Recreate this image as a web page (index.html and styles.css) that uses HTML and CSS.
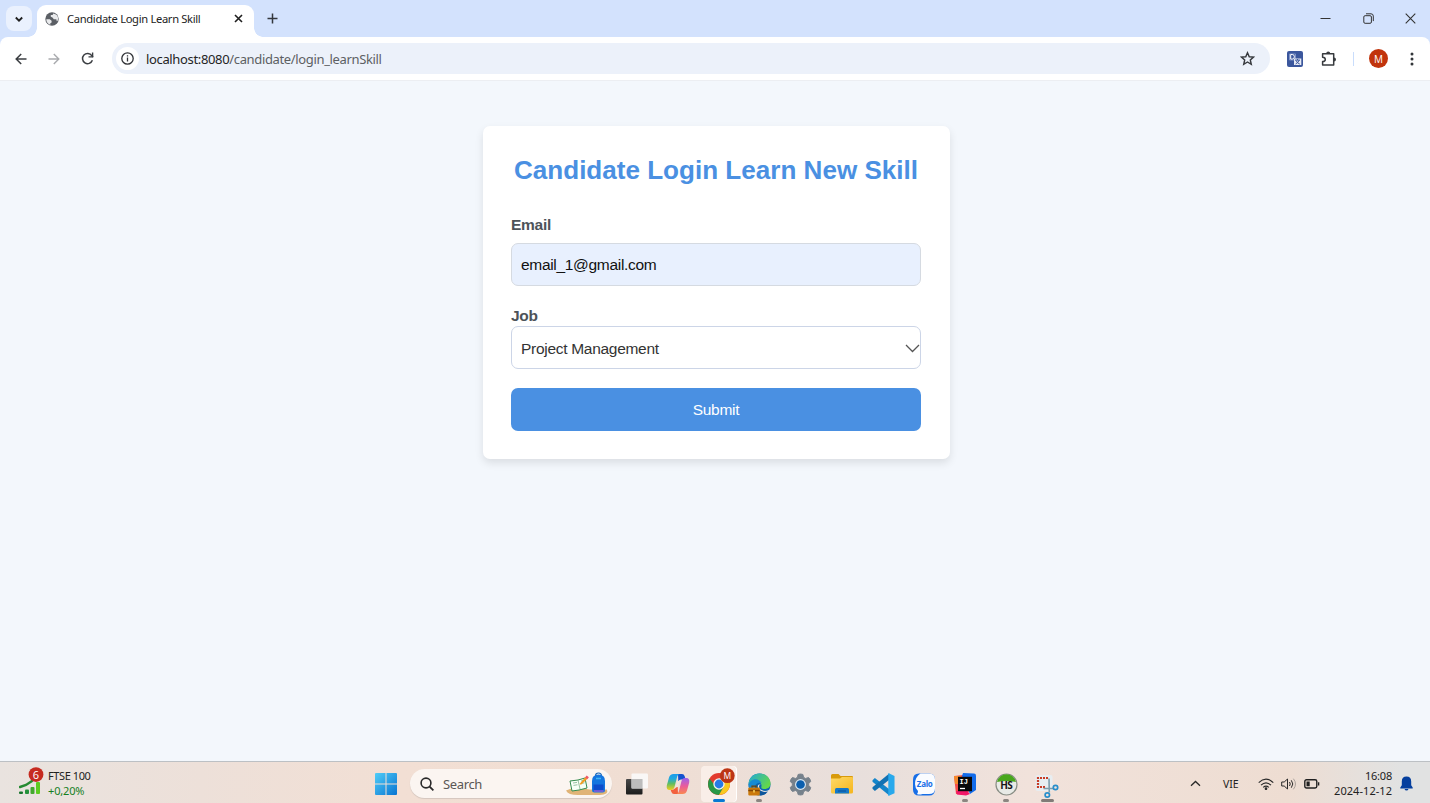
FILE: index.html
```html
<!DOCTYPE html>
<html lang="en">
<head>
<meta charset="utf-8">
<title>Candidate Login Learn Skill</title>
<link rel="stylesheet" href="styles.css">
</head>
<body>
<div class="screen">
  <header class="tabstrip">
    <div class="tab-search"><svg width="10" height="10" viewBox="0 0 10 10"><path d="M1.800 3.500 5 6.700l3.200-3.200" fill="none" stroke="#1f1f1f" stroke-width="1.800"/></svg></div>
    <div class="tab">
      <svg class="globe" width="14" height="14" viewBox="0 0 14 14"><circle cx="7" cy="7" r="6.700" fill="#5b5f65"/><path d="M1.300 7.200h3.500l1.800 1.500v1.800l-1.300.7v1.600C3 12.100 1.200 9.900 1.300 7.200zM8.300 1.500 7.600 3H5.800v1.700l1.700.8 1.300 1.800h2.500l.5 2 .7-.4c1.500-3.300.1-6.700-4.200-7.400z" fill="#e9eaec"/></svg>
      <span class="tab-title">Candidate Login Learn Skill</span>
      <svg class="tab-close" width="9" height="9" viewBox="0 0 9 9"><path d="m1 1 7 7m0-7L1 8" stroke="#1f1f1f" stroke-width="1.600"/></svg>
    </div>
    <svg class="new-tab" width="11" height="11" viewBox="0 0 11 11"><path d="M5.500.5v10M.5 5.500h10" stroke="#33373d" stroke-width="1.500"/></svg>
    <div class="window-controls">
      <svg width="11" height="11" viewBox="0 0 11 11"><path d="M.5 5.500h10" stroke="#333" stroke-width="1"/></svg>
      <svg width="11" height="11" viewBox="0 0 11 11" fill="none" stroke="#333"><rect x=".8" y="2.700" width="7.600" height="7.600" rx="1.300"/><path d="M3 .8h5a2.300 2.300 0 0 1 2.300 2.300v5"/></svg>
      <svg width="11" height="11" viewBox="0 0 11 11"><path d="m.7.700 9.600 9.600m0-9.600L.7 10.300" stroke="#333" stroke-width="1.100"/></svg>
    </div>
  </header>

  <nav class="toolbar">
    <div class="toolbar-inner">
      <div class="nav-buttons">
        <svg width="12" height="12" viewBox="0 0 12 12"><path d="M11.500 6H1.300m4.900-5L1.200 6l5 5" fill="none" stroke="#3b3e42" stroke-width="1.500"/></svg>
        <svg width="12" height="12" viewBox="0 0 12 12"><path d="M.5 6h10.200m-4.900-5 5 5-5 5" fill="none" stroke="#a9abae" stroke-width="1.400"/></svg>
        <svg width="13" height="13" viewBox="0 0 13 13"><path d="M11.400 8.300A5.100 5.100 0 1 1 10.800 3.600L12 5" fill="none" stroke="#3b3e42" stroke-width="1.500"/><path d="M12.300.6v5H7.500V4.200h3.400V.6z" fill="#3b3e42"/></svg>
      </div>
      <div class="omnibox">
        <span class="site-info"><svg width="13" height="13" viewBox="0 0 13 13"><circle cx="6.500" cy="6.500" r="5.700" fill="none" stroke="#303236" stroke-width="1.300"/><path d="M6.500 5.600v4M6.500 3.200v1.300" stroke="#303236" stroke-width="1.300"/></svg></span>
        <span class="url">localhost:8080<span class="url-path">/candidate/login_learnSkill</span></span>
        <svg class="star" width="15" height="15" viewBox="0 0 24 24"><path d="m12 2.800 2.800 6.400 6.900.6-5.200 4.600 1.500 6.800-6-3.600-6 3.600 1.500-6.800-5.200-4.600 6.900-.6z" fill="none" stroke="#36393d" stroke-width="2.300"/></svg>
      </div>
      <div class="extensions">
        <svg width="16" height="16" viewBox="0 0 16 16"><rect width="16" height="16" rx="2" fill="#3b579d"/><path d="M2.500 3h6v6h-6z" fill="none" stroke="#7f94c8"/><path d="M3.700 3.500v4.600h1.500q2.200 0 2.200-2.300T5.200 3.500z" fill="none" stroke="#fff"/><path d="M7 7.500h7.300V14H7z" fill="#e6eaf5"/><path d="M8 9.100h5M10.500 8v1.100m1.700 0q-.7 2.400-3.600 3.900m.5-3.400q1 2.400 3.700 3.500" fill="none" stroke="#3b579d"/></svg>
        <svg class="puzzle" width="16" height="16" viewBox="0 0 16 16"><path d="M1.600 2.700h11.100v11.400H1.600v-3.500q2.700-.2 2.700-2.200T1.600 6.200z" fill="none" stroke="#383b3f" stroke-width="1.500" stroke-linejoin="round"/><path d="M5.200 2.400a2 2 0 0 1 4 0zM13 6.400a2 2 0 0 1 0 4z" fill="#383b3f"/></svg>
        <span class="divider"></span>
        <span class="avatar">M</span>
        <svg class="more" width="4" height="14" viewBox="0 0 4 14" fill="#33363a"><circle cx="2" cy="2" r="1.500"/><circle cx="2" cy="7" r="1.500"/><circle cx="2" cy="12" r="1.500"/></svg>
      </div>
    </div>
  </nav>

  <main class="page">
    <form class="card">
      <h1 class="card-title">Candidate Login Learn New Skill</h1>
      <label class="label label-email" for="email">Email</label>
      <input class="email" id="email" type="text" value="email_1@gmail.com">
      <label class="label label-job">Job</label>
      <div class="select"><span>Project Management</span><svg width="15" height="9" viewBox="0 0 15 9"><path d="m1 1 6.500 6.500L14 1" fill="none" stroke="#555" stroke-width="1.300"/></svg></div>
      <button class="submit" type="button">Submit</button>
    </form>
  </main>

  <footer class="taskbar">
    <div class="widget">
      <svg width="26" height="30" viewBox="0 0 26 30"><rect x="0" y="24.500" width="4" height="2.500" rx="1" fill="#17762c"/><rect x="6" y="22.500" width="4" height="4.500" rx="1" fill="#24913a"/><rect x="11.500" y="20" width="4" height="7" rx="1" fill="#43a82e"/><rect x="17" y="15" width="4" height="12" rx="1" fill="#5dcc20"/><path d="m1 20 6-2 6-4" fill="none" stroke="#268a32" stroke-width="2.400" stroke-linecap="round"/><circle cx="17" cy="7.600" r="7.400" fill="#c62b20"/><text x="17" y="11.600" class="count-text">6</text></svg>
      <div class="widget-text"><span>FTSE 100</span><span class="gain">+0,20%</span></div>
    </div>

    <div class="dock">
      <svg class="start" width="22" height="22" viewBox="0 0 22 22"><defs><linearGradient id="win" x2="1" y2="1"><stop stop-color="#50cdf7"/><stop offset="1" stop-color="#0874d2"/></linearGradient></defs><path d="M1 0h9.500v10.500H0V1q0-1 1-1zm10.500 0H21q1 0 1 1v9.500H11.500zM0 11.500h10.500V22H1q-1 0-1-1zm11.500 0H22V21q0 1-1 1h-9.500z" fill="url(#win)"/></svg>
      <div class="search">
        <svg width="14" height="14" viewBox="0 0 14 14"><circle cx="6" cy="6" r="4.900" fill="none" stroke="#292929" stroke-width="1.600"/><path d="m9.600 9.600 3.800 3.800" stroke="#292929" stroke-width="1.800"/></svg>
        <span class="search-label">Search</span>
        <svg class="school" width="43" height="24" viewBox="0 0 43 24"><path d="M0 18.500q8-4 17-2t24 1q2 5-7 5.500H12Q2 23 0 18.500z" fill="#e0b477"/><path d="m4 9 8-1 7-2 2 10-8 2-7 1z" fill="#f8fff7" stroke="#348b4d"/><path d="m12 8 2 9M7 11l4-.6m-3.500 3 4-.6M15 9l3-.7m-2.500 3.200 3-.7" stroke="#7fb18c" stroke-width=".8"/><path d="m13.500 12 6-7 2 1.700-6.500 6z" fill="#f49c22"/><path d="m19 5.500 1.700-2 2.200 1.700-1.600 2z" fill="#ee5865"/><path d="M29.500 4q0-3 3-3t3 3" fill="none" stroke="#1463b7" stroke-width="1.200"/><path d="M26 9q0-6.500 6.500-6.500T39 9v9q0 2.500-2.500 2.500h-8Q26 20.500 26 18z" fill="#1475df"/><path d="M27.500 12.500h10v5.500q-5 1.500-10 0z" fill="#0e4ccb"/><path d="M30 6.500h5" stroke="#40b5f4" stroke-width="1.500"/><path d="M28 19h9.500" stroke="#8c58d9" stroke-width="1.500"/></svg>
      </div>
      <div class="apps">
        <div class="app"><svg width="22" height="22" viewBox="0 0 22 22"><defs><linearGradient id="tv" x2="0" y2="1"><stop stop-color="#484848"/><stop offset="1" stop-color="#1c1c1c"/></linearGradient></defs><rect y="6" width="16.500" height="15.500" rx="1" fill="url(#tv)"/><rect x="5.500" y=".5" width="16.500" height="15" rx="1" fill="#fafafa" opacity=".9"/><path d="M5.500 6h11v9.500h-11z" fill="#bcbcbc"/></svg></div>
        <div class="app"><svg width="24" height="22" viewBox="0 0 24 22"><defs><linearGradient id="cpa" x2="0" y2="1"><stop stop-color="#1a9cec"/><stop offset=".3" stop-color="#22a9de"/><stop offset=".6" stop-color="#5fbd62"/><stop offset="1" stop-color="#f5ce1c"/></linearGradient><linearGradient id="cpb" x2="0" y2="1"><stop stop-color="#9b62ee"/><stop offset=".5" stop-color="#ea5b9b"/><stop offset="1" stop-color="#fa8850"/></linearGradient></defs><path d="M12 1h4q2 0 2.700 2.300l.9 3.200H15q-2 0-2.700 2z" fill="#1453cf"/><path d="M7.500 1h6q-1.700.4-2.300 2.500L8.500 14q-.8 3-3.500 3H3.700Q.1 17 .8 12.500L3 4.500Q4 1 7.500 1z" fill="url(#cpa)"/><path d="M12 21H8q-2 0-2.700-2.300L4.700 17q2.500.2 3.500-1l3.500-2.500z" fill="#f2613f"/><path d="M16.500 21h-6q1.700-.4 2.300-2.500L15.500 8q.8-3 3.500-3h1.300q3.600 0 2.900 4.500l-2.200 8Q20 21 16.500 21z" fill="url(#cpb)"/><path d="M11.200 8h2.600l-1.500 6H9.700z" fill="#f4e4dc"/></svg></div>
        <div class="app app-active"><svg class="chrome" width="30" height="28" viewBox="0 -2 30 28"><circle cx="12" cy="14" r="11" fill="#e33b2f"/><path d="M2.500 8.500A11 11 0 0 0 12 25l5-8.500-5-2.500-4.500 1z" fill="#279847"/><path d="M12 25A11 11 0 0 0 21.600 8.600H12l5 8z" fill="#f8c920"/><circle cx="12" cy="14" r="5.700" fill="#f6f6ee"/><circle cx="12" cy="14" r="4.400" fill="#267be7"/><circle cx="20.300" cy="5.700" r="7.400" fill="#bd3514"/><text x="20.300" y="8.900" class="badge-text">M</text></svg></div>
        <div class="app app-running"><svg width="23" height="23" viewBox="0 0 23 23"><defs><linearGradient id="edge" y2=".6"><stop stop-color="#20a8da"/><stop offset="1" stop-color="#64d947"/></linearGradient></defs><circle cx="11.500" cy="11.500" r="11" fill="#0b66b1"/><path d="M.6 12C.6 4.500 5.300.5 11.500.5c7 0 11.300 5 11 10.500-.2 3.800-4 5.700-8 4.700-1.800-.5-1-1.700-1-3.200 0-2.700-2.500-4-5-4Q3.500 8.500.6 12z" fill="url(#edge)"/><path d="M.6 12c1-6 9.500-8.500 13-2-5.500-1.300-7.700 3-5.500 7l-4 3Q.8 17 .6 12z" fill="#168bd4"/><path d="M13.500 10.500q-4.500 2-1 6 4 2.500 8.500.5l1.800 1.300-2 2.700Q14 19 11.500 17t-1.300-5z" fill="#e9e4e2"/><path d="M11 17q4 3 9 1.600-3 4-8 4z" fill="#0d559b"/><rect x=".3" y="14.500" width="11.500" height="8" rx="1" fill="#cb790c"/><path d="M4 14.500v-1.300h4v1.300" fill="none" stroke="#704005" stroke-width="1.200"/><path d="M.3 17.500h11.500" stroke="#804505" stroke-width="1.500"/><path d="M5.200 17h1.600v2.500H5.200z" fill="#f8cf57"/></svg></div>
        <div class="app"><svg width="23" height="23" viewBox="0 0 24 24"><path d="M9.500 1.500q2.500-.9 5 0l.7 3 2 1.200 3.200-1q1.800 1.500 2.300 4.200L20.500 11v2l2.200 2.100q-.5 2.700-2.300 4.200l-3.200-1-2 1.200-.7 3q-2.500.9-5 0l-.7-3-2-1.200-3.200 1q-1.800-1.500-2.300-4.200L3.500 13v-2L1.300 8.900q.5-2.700 2.300-4.200l3.200 1 2-1.200z" fill="#76818b" stroke="#76818b" stroke-width="1"/><circle cx="12" cy="12" r="5.700" fill="#d9e8f4"/><circle cx="12" cy="12" r="4.500" fill="#0b5fae"/></svg></div>
        <div class="app"><svg width="24" height="22" viewBox="0 0 24 22"><defs><linearGradient id="folder" y2="1"><stop stop-color="#ffda67"/><stop offset="1" stop-color="#f5b51d"/></linearGradient></defs><path d="M1 2.500Q1 1 2.500 1h6l2 2H22q1 0 1 1v5H1z" fill="#d89a0b"/><path d="M1 5.500h9l2-1.500H22q1 0 1 1V19q0 1.500-1.500 1.500h-19Q1 20.500 1 19z" fill="url(#folder)"/><path d="M5 20.500v-4Q5 15 6.500 15h11q1.500 0 1.500 1.500v4z" fill="#1478c9"/><path d="M8 18h8" stroke="#0b559e" stroke-width="1.200"/></svg></div>
        <div class="app"><svg width="23" height="23" viewBox="0 0 24 24"><path d="M.5 7.500 3 5.300 18 17v6.500L.5 9.200z" fill="#1485ca"/><path d="M.5 16.500 3 18.700 18 7V.5L.5 14.800z" fill="#1272b3"/><path d="m17 0 6.500 3v18L17 24z" fill="#29a9ec"/></svg></div>
        <div class="app"><svg width="24" height="23" viewBox="0 0 24 23"><path d="M7 .5h10q6 0 6 6v10q0 6-6 6H7q-6 0-6-6v-10q0-6 6-6z" fill="#176ee7"/><path d="M8.500.5H17q6 0 6 6v9q0 5.500-6 5.500h-6.500Q7 22 5 21q1-1 1-3-3-3-3-7Q3 4 8.500.5z" fill="#fafcff"/><text x="12.700" y="13.500" class="zalo-text">Zalo</text></svg></div>
        <div class="app app-running"><svg width="24" height="23" viewBox="0 0 24 23"><path d="m1 3 9-1 8 12-4 8-11-1z" fill="#f54d4b"/><path d="M1 3h7v8H2z" fill="#f58a2c"/><path d="m10 0 11 .5q2 .2 2 2V17l-6 4L9 3z" fill="#126bea"/><path d="m3 18 11 0 3 3-4 1.500-9-1z" fill="#f21768"/><path d="M5 3.800h14v14.400H5z" fill="#08080b"/><text x="6.500" y="11.300" class="ij-text">IJ</text><path d="M7 15.500h5" stroke="#fff" stroke-width="1.300"/></svg></div>
        <div class="app app-running"><svg width="23" height="23" viewBox="0 0 23 23"><circle cx="11.500" cy="11.500" r="10.500" fill="#e8eae6" stroke="#888d84" stroke-width="1.200"/><path d="M2 9a9.700 9.700 0 0 1 19 0q-9.500-2-19 0z" fill="#49a71c"/><text x="11.300" y="15.600" class="hs-text">HS</text></svg></div>
        <div class="app app-snip"><svg width="24" height="24" viewBox="0 0 24 24"><rect x=".5" y="0" width="17" height="16" rx="2" fill="#e7edf1"/><path d="M13 3H3v9h8" fill="none" stroke="#c83c25" stroke-width="2.200" stroke-dasharray="2 1"/><path d="m14 3.500.3 14M8.500 13.500H19" stroke="#7d9dac" stroke-width="1.600"/><circle cx="20.500" cy="12.500" r="2.200" fill="none" stroke="#258ecc" stroke-width="1.700"/><circle cx="12.300" cy="20" r="2.200" fill="none" stroke="#258ecc" stroke-width="1.700"/></svg></div>
      </div>
    </div>

    <div class="tray">
      <svg class="tray-up" width="11" height="7" viewBox="0 0 11 7"><path d="m1 5.700 4.500-4.200L10 5.700" fill="none" stroke="#292929" stroke-width="1.300"/></svg>
      <span class="lang">VIE</span>
      <svg class="wifi" width="16" height="12" viewBox="0 0 16 12" fill="none" stroke="#292929" stroke-width="1.100"><path d="M.7 4.700q7.300-7 14.600 0M3 7.200q5-4.800 10 0M5.200 9.400q2.800-2.600 5.600 0"/><circle cx="8" cy="10.700" r=".8" fill="#292929"/></svg>
      <svg class="sound" width="16" height="12" viewBox="0 0 16 12" fill="none" stroke="#292929"><path d="M.7 4h2.500L6.500 1v10L3.200 8H.7zM8.500 4q1.500 2 0 4M10.300 2.300q3 3.700 0 7.400"/><path d="M12.400.7q4.200 5.300 0 10.600" stroke="#aaa19b"/></svg>
      <svg class="battery" width="16" height="10" viewBox="0 0 16 10"><rect x=".8" y=".8" width="12" height="8.200" rx="1.700" fill="none" stroke="#202020" stroke-width="1.400"/><path d="M2.500 2.500h3.200v4.800H2.500zM14 3.200h1.300v3.300H14z" fill="#202020"/></svg>
      <div class="clock"><span>16:08</span><span class="date">2024-12-12</span></div>
      <svg class="bell" width="13" height="15" viewBox="0 0 13 15"><path d="M6.500.5q4.700 0 4.700 5v3.700l1.500 2.300v.9H.3v-.9l1.500-2.300V5.500q0-5 4.700-5zM4.500 13h4q-.5 1.500-2 1.500t-2-1.500z" fill="#053f9e"/></svg>
    </div>
  </footer>
</div>
</body>
</html>
```
FILE: styles.css
```css
* { box-sizing: border-box; }
body { margin: 0; font-family: "Noto Sans", "Open Sans", sans-serif; color: #222; }
svg { display: block; flex: none; }
.screen { width: 1430px; height: 803px; display: flex; flex-direction: column; overflow: hidden; }

/* Browser window */
.tabstrip { height: 37px; flex: none; display: flex; background: #d3e2fd; padding-left: 6px; }
.tab-search { width: 26px; height: 25px; margin-top: 6px; border-radius: 8px; background: #eaf1fe; display: grid; place-items: center; }
.tab { position: relative; width: 217px; height: 32px; margin: 5px 0 0 5px; border-radius: 9px 9px 0 0; background: #fff; display: flex; align-items: center; padding: 0 11px 5px 8px; }
.tab::before, .tab::after { content: ""; position: absolute; bottom: 0; width: 9px; height: 9px; }
.tab::before { left: -9px; background: radial-gradient(circle at 0 0, transparent 8.500px, #fff 9px); }
.tab::after { right: -9px; background: radial-gradient(circle at 100% 0, transparent 8.500px, #fff 9px); }
.tab-title { margin-left: 8px; font: 11.200px "Noto Sans", sans-serif; letter-spacing: -.33px; white-space: nowrap; }
.tab-close { margin-left: auto; }
.new-tab { margin: 13px 0 0 13px; }
.window-controls { margin: 13px 14px 0 auto; display: flex; gap: 31.500px; }
.toolbar { height: 44px; flex: none; background: #d3e2fd; }
.toolbar-inner { height: 44px; background: #fff; border-bottom: 1px solid #eceef2; border-radius: 8px 8px 0 0; display: flex; align-items: center; padding-left: 15px; }
.nav-buttons { display: flex; align-items: center; gap: 21px; width: 97px; }
.omnibox { width: 1158px; height: 31px; border-radius: 16px; background: #ecf1fa; display: flex; align-items: center; padding: 0 15px 0 4px; }
.site-info { width: 23px; height: 23px; border-radius: 50%; background: #fff; display: grid; place-items: center; }
.url { margin-left: 7px; font-size: 13px; letter-spacing: -.35px; white-space: nowrap; color: #242424; }
.url-path { color: #5c5f63; }
.star { margin-left: auto; }
.extensions { display: flex; align-items: center; padding-left: 17px; }
.puzzle { margin-left: 18px; }
.divider { width: 1px; height: 14px; margin-left: 16px; background: #c9ddfc; }
.avatar { width: 19px; height: 19px; margin-left: 15px; border-radius: 50%; background: #c1340c; color: #fff; display: grid; place-items: center; font: 10px "Open Sans", sans-serif; }
.more { margin-left: 22px; }

/* Login page */
.page { flex: 1; display: flex; justify-content: center; align-items: flex-start; padding: 45px 0 0 3px; background: #f3f7fc; font-family: "Liberation Sans", Arial, sans-serif; }
.card { width: 467px; height: 333px; padding: 28px 29px 28px 28px; display: flex; flex-direction: column; border-radius: 7px; background: #fff; box-shadow: 0 4px 9px rgba(0, 0, 0, .1); }
.card-title { margin: 0; font-size: 26.070px; line-height: 32px; text-align: center; color: #4a90e2; white-space: nowrap; }
.label { font-size: 15.500px; line-height: 18px; font-weight: bold; letter-spacing: -.28px; color: #4d5359; }
.label-email { margin-top: 30px; }
.email { width: 410px; height: 43px; margin-top: 9px; padding: 0 9px; border: 1px solid #d5dae1; border-radius: 7px; background: #e8f0fe; font: 15.500px "Liberation Sans", Arial, sans-serif; letter-spacing: -.31px; color: #111; }
.label-job { margin-top: 21px; }
.select { height: 43px; margin-top: 1px; padding: 2px 0 0 9px; border: 1px solid #ccd5e7; border-radius: 7px; display: flex; align-items: center; justify-content: space-between; font-size: 15.500px; letter-spacing: -.29px; color: #333; }
.submit { height: 43px; margin-top: 19px; flex: none; border: 0; border-radius: 7px; background: #4a90e2; color: #fff; font: 15.500px "Liberation Sans", Arial, sans-serif; letter-spacing: -.3px; }

/* Desktop taskbar */
.taskbar { height: 42px; flex: none; border-top: 1px solid #bcc0c4; display: grid; grid-template-columns: 375px 694px 1fr; background: linear-gradient(90deg, #e9e3df, #ede0d9 14%, #f2dfd4 28%, #f0ded3 45%, #e8dfdc 60%, #f1e2db 72%, #eeddd2 90%, #e1e2e2 98%); }
.widget { display: flex; padding: 5px 0 0 19px; }
.widget-text { display: flex; flex-direction: column; margin: 1px 0 0 3px; font-size: 11px; line-height: 15px; letter-spacing: -.4px; }
.gain { color: #16801d; letter-spacing: -.15px; }
.count-text { font: 11px "Open Sans", sans-serif; fill: #fff; text-anchor: middle; }
.dock { display: flex; }
.start { margin-top: 11px; }
.search { width: 202px; height: 29px; margin: 7px 0 0 13px; border-radius: 15px; background: #fbf5f1; box-shadow: 0 1px 1px #d4c6be; display: flex; align-items: center; padding: 0 3px 0 10px; }
.search-label { margin-left: 9px; font-size: 13px; letter-spacing: -.35px; color: #5a5755; }
.school { margin-left: auto; }
.apps { margin-left: 4px; display: grid; grid-template-columns: repeat(11, 41.100px); }
.app { position: relative; height: 41px; padding-top: 3px; display: grid; place-items: center; }
.app::after { content: ""; position: absolute; bottom: 1px; left: 17px; width: 6px; height: 3px; border-radius: 2px; }
.app-running::after { background: #8c8581; }
.app-active { height: 36px; margin: 4px 3px 0 3px; padding: 0 0 4px 6px; border-radius: 4px; background: #f9eee8; box-shadow: 1px 0 #fff; }
.app-active::after { left: 12px; bottom: 0; width: 12px; background: #0879d4; }
.app-snip { padding-top: 9px; }
.app-snip::after { left: 14px; width: 13px; background: #817b78; }
.badge-text { font: 8.500px "Open Sans", sans-serif; fill: #fff; text-anchor: middle; }
.zalo-text { font: bold 8px "Open Sans", sans-serif; fill: #176ee7; text-anchor: middle; letter-spacing: -.3px; }
.ij-text { font: bold 7px "Liberation Mono", monospace; fill: #fff; }
.hs-text { font: bold 10px "Open Sans", sans-serif; fill: #171717; text-anchor: middle; letter-spacing: -.5px; }
.tray { display: flex; align-items: center; padding: 2px 0 0 121px; }
.lang { margin-left: 22px; width: 18px; font-size: 10.500px; white-space: nowrap; }
.wifi { margin-left: 17px; }
.sound { margin-left: 7px; }
.battery { margin-left: 7px; }
.clock { width: 65px; margin: 0 0 2px 7px; display: flex; flex-direction: column; align-items: flex-end; font-size: 11px; line-height: 15px; letter-spacing: -.2px; white-space: nowrap; }
.date { letter-spacing: .05px; }
.bell { margin-left: 8px; }
```
